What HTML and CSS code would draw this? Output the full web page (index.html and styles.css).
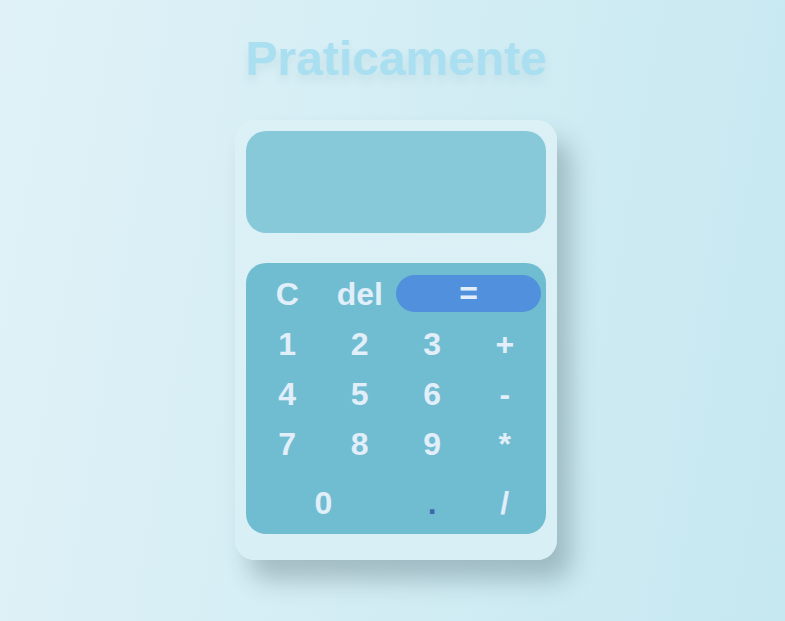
FILE: index.html
```html
<!DOCTYPE html>
<html lang="it">
<head>
<meta charset="utf-8">
<title>Praticamente</title>
<link rel="stylesheet" href="styles.css">
</head>
<body>
  <h1 class="title">Praticamente</h1>
  <div class="calc">
    <div class="display"></div>
    <div class="keypad">
      <button class="key">C</button>
      <button class="key">del</button>
      <button class="key key-eq">=</button>
      <button class="key">1</button>
      <button class="key">2</button>
      <button class="key">3</button>
      <button class="key">+</button>
      <button class="key">4</button>
      <button class="key">5</button>
      <button class="key">6</button>
      <button class="key">-</button>
      <button class="key">7</button>
      <button class="key">8</button>
      <button class="key">9</button>
      <button class="key">*</button>
      <button class="key key-zero last">0</button>
      <button class="key key-dot last">.</button>
      <button class="key last">/</button>
    </div>
  </div>
</body>
</html>
```
FILE: styles.css
```css
html, body {
  margin: 0;
  height: 100%;
}
body {
  background: linear-gradient(100deg, #e0f2f7 0%, #d3edf4 50%, #c6e8f1 100%);
  font-family: "Liberation Sans", Arial, sans-serif;
  padding: 31px 0 0 7px;
  box-sizing: border-box;
  display: flex;
  flex-direction: column;
  align-items: center;
}
.title {
  margin: 0;
  font-size: 48px;
  line-height: 55px;
  font-weight: bold;
  color: #a9dff0;
  text-shadow: 0 6px 8px rgba(90, 140, 160, 0.12);
}
.calc {
  margin-top: 34px;
  width: 322px;
  box-sizing: border-box;
  padding: 11px 11px 26px;
  border-radius: 20px;
  background: linear-gradient(160deg, #dcf1f6, #d7eff5);
  box-shadow: 14px 20px 24px rgba(50, 75, 85, 0.3);
}
.display {
  height: 102px;
  border-radius: 20px;
  background: #88c9d9;
  margin-bottom: 30px;
}
.keypad {
  height: 271px;
  box-sizing: border-box;
  border-radius: 20px;
  background: #70bdd1;
  padding: 12px 5px;
  display: grid;
  grid-template-columns: repeat(4, 1fr);
  grid-template-rows: repeat(5, 37px);
  row-gap: 13px;
}
.key {
  border: none;
  background: transparent;
  padding: 1px 0 0;
  margin: 0;
  font-family: "Liberation Sans", Arial, sans-serif;
  font-weight: bold;
  font-size: 32px;
  line-height: 36px;
  height: 37px;
  color: #e2eef9;
}
.key-eq {
  grid-column: span 2;
  background: #5190dc;
  border-radius: 19px;
  padding: 0 0 1px;
}
.key-zero {
  grid-column: span 2;
}
.key-dot {
  color: #3e68a8;
}
.last {
  margin-top: 9px;
}
```
